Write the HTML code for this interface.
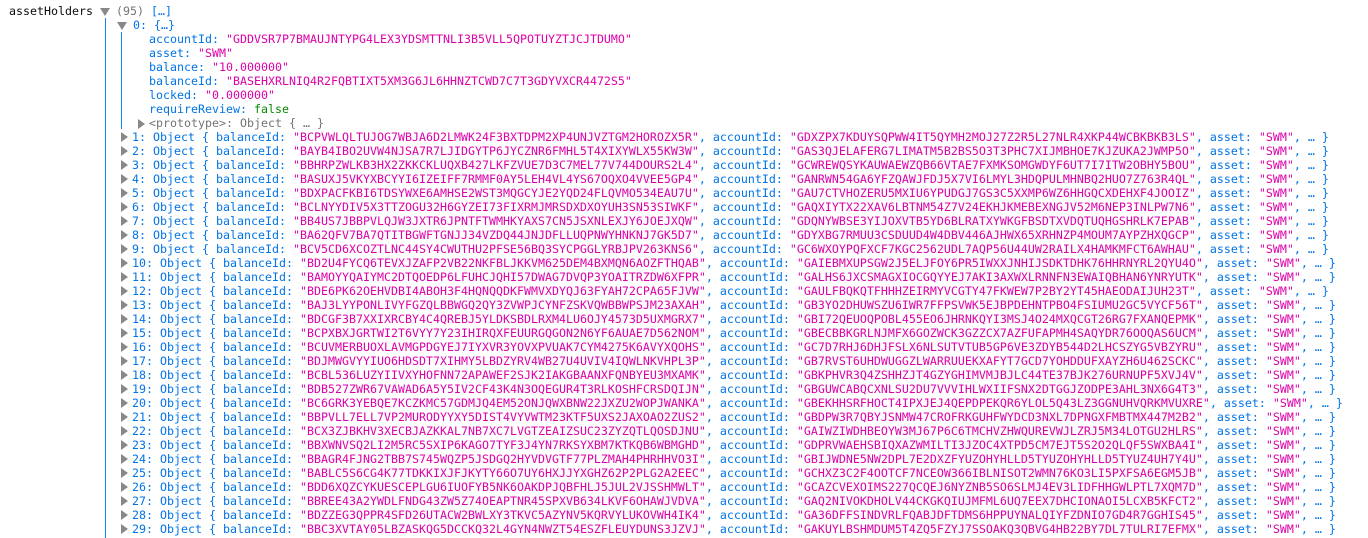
<!DOCTYPE html>
<html><head><meta charset="utf-8"><style>
body{margin:0;background:#fff;width:1368px;height:538px;overflow:hidden;position:relative;font-family:"DejaVu Sans Mono","Liberation Mono",monospace;font-size:11.63px;}
.r{position:absolute;height:14px;line-height:14px;white-space:pre;}
.k{color:#0074e8}.s{color:#dd00a9}.g{color:#737373}.b{color:#058b00}.n{color:#0c0c0d}
.t{position:absolute;width:0;height:0;border-left:5px solid transparent;border-right:5px solid transparent;border-top:8px solid #888;}
.tr{position:absolute;width:0;height:0;border-top:5px solid transparent;border-bottom:5px solid transparent;border-left:7px solid #888;}
.vl{position:absolute;width:1px;background:#1a7fe8;}
</style></head><body>
<div class="vl" style="left:105px;top:18px;height:520px"></div>
<div class="vl" style="left:121px;top:32px;height:97px"></div>
<div class="r n" style="left:9px;top:4px">assetHolders</div>
<div class="t" style="left:100px;top:8px"></div>
<div class="r" style="left:116px;top:4px"><span class="g">(95) </span><span class="k">[…]</span></div>
<div class="t" style="left:117px;top:22px"></div>
<div class="r k" style="left:133px;top:18px">0: {…}</div>
<div class="r" style="left:149px;top:32px"><span class="k">accountId: </span><span class="s">"GDDVSR7P7BMAUJNTYPG4LEX3YDSMTTNLI3B5VLL5QPOTUYZTJCJTDUMO"</span></div>
<div class="r" style="left:149px;top:46px"><span class="k">asset: </span><span class="s">"SWM"</span></div>
<div class="r" style="left:149px;top:60px"><span class="k">balance: </span><span class="s">"10.000000"</span></div>
<div class="r" style="left:149px;top:74px"><span class="k">balanceId: </span><span class="s">"BASEHXRLNIQ4R2FQBTIXT5XM3G6JL6HHNZTCWD7C7T3GDYVXCR4472S5"</span></div>
<div class="r" style="left:149px;top:88px"><span class="k">locked: </span><span class="s">"0.000000"</span></div>
<div class="r" style="left:149px;top:102px"><span class="k">requireReview: </span><span class="b">false</span></div>
<div class="tr" style="left:138px;top:119px"></div>
<div class="r g" style="left:149px;top:116px">&lt;prototype&gt;: Object { … }</div>
<div id="rows"></div>
<script>
(function(){
var d=[
["BCPVWLQLTUJOG7WBJA6D2LMWK24F3BXTDPM2XP4UNJVZTGM2HOROZX5R","GDXZPX7KDUYSQPWW4IT5QYMH2MOJ27Z2R5L27NLR4XKP44WCBKBKB3LS"],
["BAYB4IBO2UVW4NJSA7R7LJIDGYTP6JYCZNR6FMHL5T4XIXYWLX55KW3W","GAS3QJELAFERG7LIMATM5B2BS5O3T3PHC7XIJMBHOE7KJZUKA2JWMP5O"],
["BBHRPZWLKB3HX2ZKKCKLUQXB427LKFZVUE7D3C7MEL77V744DOURS2L4","GCWREWQSYKAUWAEWZQB66VTAE7FXMKSOMGWDYF6UT7I7ITW2OBHY5BOU"],
["BASUXJ5VKYXBCYYI6IZEIFF7RMMF0AY5LEH4VL4YS67OQXO4VVEE5GP4","GANRWN54GA6YFZQAWJFDJ5X7VI6LMYL3HDQPULMHNBQ2HUO7Z763R4QL"],
["BDXPACFKBI6TDSYWXE6AMHSE2WST3MQGCYJE2YQD24FLQVMO534EAU7U","GAU7CTVHOZERU5MXIU6YPUDGJ7GS3C5XXMP6WZ6HHGQCXDEHXF4JOOIZ"],
["BCLNYYDIV5X3TTZOGU32H6GYZEI73FIXRMJMRSDXDXOYUH3SN53SIWKF","GAQXIYTX22XAV6LBTNM54Z7V24EKHJKMEBEXNGJV52M6NEP3INLPW7N6"],
["BB4US7JBBPVLQJW3JXTR6JPNTFTWMHKYAXS7CN5JSXNLEXJY6JOEJXQW","GDQNYWBSE3YIJOXVTB5YD6BLRATXYWKGFBSDTXVDQTUQHGSHRLK7EPAB"],
["BA62QFV7BA7QTITBGWFTGNJJ34VZDQ44JNJDFLLUQPNWYHNKNJ7GK5D7","GDYXBG7RMUU3CSDUUD4W4DBV446AJHWX65XRHNZP4MOUM7AYPZHXQGCP"],
["BCV5CD6XCOZTLNC44SY4CWUTHU2PFSE56BQ3SYCPGGLYRBJPV263KNS6","GC6WXOYPQFXCF7KGC2562UDL7AQP56U44UW2RAILX4HAMKMFCT6AWHAU"],
["BD2U4FYCQ6TEVXJZAFP2VB22NKFBLJKKVM625DEM4BXMQN6AOZFTHQAB","GAIEBMXUPSGW2J5ELJFOY6PR5IWXXJNHIJSDKTDHK76HHRNYRL2QYU4O"],
["BAMOYYQAIYMC2DTQOEDP6LFUHCJQHI57DWAG7DVQP3YOAITRZDW6XFPR","GALHS6JXCSMAGXIOCGQYYEJ7AKI3AXWXLRNNFN3EWAIQBHAN6YNRYUTK"],
["BDE6PK62OEHVDBI4ABOH3F4HQNQQDKFWMVXDYQJ63FYAH72CPA65FJVW","GAULFBQKQTFHHHZEIRMYVCGTY47FKWEW7P2BY2YT45HAEODAIJUH23T"],
["BAJ3LYYPONLIVYFGZQLBBWGQ2QY3ZVWPJCYNFZSKVQWBBWPSJM23AXAH","GB3YO2DHUWSZU6IWR7FFPSVWK5EJBPDEHNTPBO4FSIUMU2GC5VYCF56T"],
["BDCGF3B7XXIXRCBY4C4QREBJ5YLDKSBDLRXM4LU6OJY4573D5UXMGRX7","GBI72QEUOQPOBL455EO6JHRNKQYI3MSJ4O24MXQCGT26RG7FXANQEPMK"],
["BCPXBXJGRTWI2T6VYY7Y23IHIRQXFEUURGQGON2N6YF6AUAE7D562NOM","GBECBBKGRLNJMFX6GOZWCK3GZZCX7AZFUFAPMH4SAQYDR76OOQAS6UCM"],
["BCUVMERBUOXLAVMGPDGYEJ7IYXVR3YOVXPVUAK7CYM4275K6AVYXQOHS","GC7D7RHJ6DHJFSLX6NLSUTVTUB5GP6VE3ZDYB544D2LHCSZYG5VBZYRU"],
["BDJMWGVYYIUO6HDSDT7XIHMY5LBDZYRV4WB27U4UVIV4IQWLNKVHPL3P","GB7RVST6UHDWUGGZLWARRUUEKXAFYT7GCD7YOHDDUFXAYZH6U462SCKC"],
["BCBL536LUZYIIVXYHOFNN72APAWEF2SJK2IAKGBAANXFQNBYEU3MXAMK","GBKPHVR3Q4ZSHHZJT4GZYGHIMVMJBJLC44TE37BJK276URNUPF5XVJ4V"],
["BDB527ZWR67VAWAD6A5Y5IV2CF43K4N3OQEGUR4T3RLKOSHFCRSDQIJN","GBGUWCABQCXNLSU2DU7VVVIHLWXIIFSNX2DTGGJZODPE3AHL3NX6G4T3"],
["BC6GRK3YEBQE7KCZKMC57GDMJQ4EM52ONJQWXBNW22JXZU2WOPJWANKA","GBEKHHSRFHOCT4IPXJEJ4QEPDPEKQR6YLOL5Q43LZ3GGNUHVQRKMVUXRE"],
["BBPVLL7ELL7VP2MURODYYXY5DIST4VYVWTM23KTF5UXS2JAXOAO2ZUS2","GBDPW3R7QBYJSNMW47CROFRKGUHFWYDCD3NXL7DPNGXFMBTMX447M2B2"],
["BCX3ZJBKHV3XECBJAZKKAL7NB7XC7LVGTZEAIZSUC23ZYZQTLQOSDJNU","GAIWZIWDHBEOYW3MJ67P6C6TMCHVZHWQUREVWJLZRJ5M34LOTGU2HLRS"],
["BBXWNVSQ2LI2M5RC5SXIP6KAGO7TYF3J4YN7RKSYXBM7KTKQB6WBMGHD","GDPRVWAEHSBIQXAZWMILTI3JZOC4XTPD5CM7EJT5S2O2QLQF5SWXBA4I"],
["BBAGR4FJNG2TBB7S745WQZP5JSDGQ2HYVDVGTF77PLZMAH4PHRHHVO3I","GBIJWDNE5NW2DPL7E2DXZFYUZOHYHLLD5TYUZOHYHLLD5TYUZ4UH7Y4U"],
["BABLC5S6CG4K77TDKKIXJFJKYTY66O7UY6HXJJYXGHZ62P2PLG2A2EEC","GCHXZ3C2F4OOTCF7NCEOW366IBLNISOT2WMN76KO3LI5PXFSA6EGM5JB"],
["BDD6XQZCYKUESCEPLGU6IUOFYB5NK6OAKDPJQBFHLJ5JUL2VJSSHMWLT","GCAZCVEXOIMS227QCQEJ6NYZNB5SO6SLMJ4EV3LIDFHHGWLPTL7XQM7D"],
["BBREE43A2YWDLFNDG43ZW5Z74OEAPTNR45SPXVB634LKVF6OHAWJVDVA","GAQ2NIVOKDHOLV44CKGKQIUJMFML6UQ7EEX7DHCIONAOI5LCXB5KFCT2"],
["BDZZEG3QPPR4SFD26UTACW2BWLXY3TKVC5AZYNV5KQRVYLUKOVWH4IK4","GA36DFFSINDVRLFQABJDFTDMS6HPPUYNALQIYFZDNIO7GD4R7GGHIS45"],
["BBC3XVTAY05LBZASKQG5DCCKQ32L4GYN4NWZT54ESZFLEUYDUNS3JZVJ","GAKUYLBSHMDUM5T4ZQ5FZYJ7SSOAKQ3QBVG4HB22BY7DL7TULRI7EFMX"]
];
var h="";
for(var i=0;i<d.length;i++){
 var y=130+14*i;
 h+='<div class="tr" style="left:121px;top:'+(y+2)+'px"></div>';
 h+='<div class="r" style="left:132px;top:'+y+'px"><span class="k">'+(i+1)+': Object { balanceId: </span><span class="s">"'+d[i][0]+'"</span><span class="k">, accountId: </span><span class="s">"'+d[i][1]+'"</span><span class="k">, asset: </span><span class="s">"SWM"</span><span class="k">, … }</span></div>';
}
document.getElementById("rows").innerHTML=h;
})();
</script>
</body></html>
